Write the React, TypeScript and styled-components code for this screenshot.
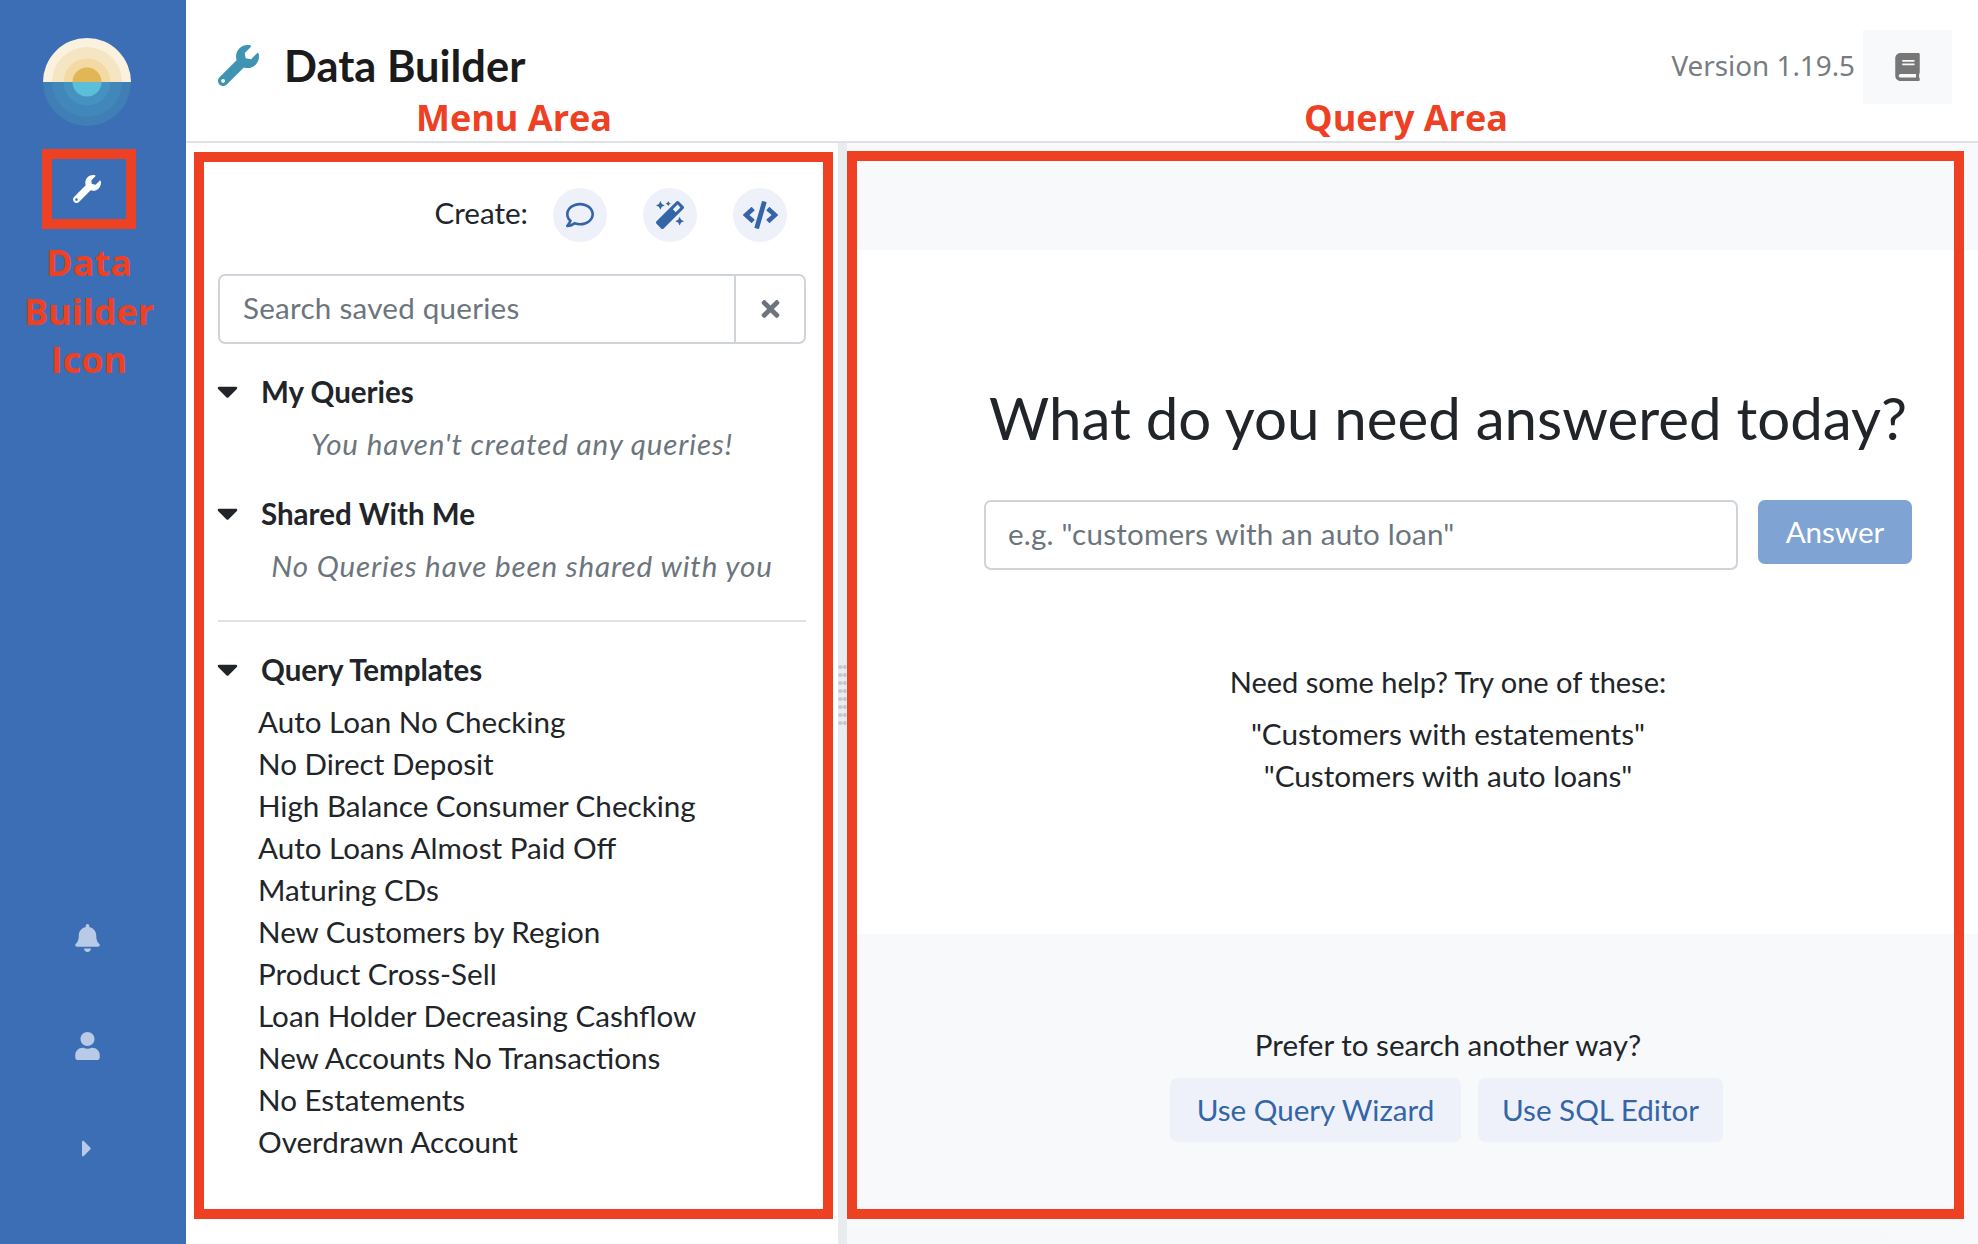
import React from "react";
import styled, { createGlobalStyle } from "styled-components";
import { FaWrench, FaBook, FaBell, FaUser, FaCaretRight, FaCaretDown, FaRegComment, FaMagic, FaCode, FaTimes } from "react-icons/fa";

const Global = createGlobalStyle`
  html, body { margin: 0; padding: 0; background: #fff; }
  * { box-sizing: border-box; }
  body { font-family: "Lato", "Noto Sans", sans-serif; color: #212529; }
`;

const Page = styled.div`
  position: relative;
  display: flex;
  width: 1978px;
  height: 1244px;
  overflow: hidden;
`;

const Sidebar = styled.aside`
  width: 186px;
  flex: none;
  background: #3b6eb4;
  display: flex;
  flex-direction: column;
  align-items: center;
  padding: 38px 12px 0 0;
`;

const Logo = styled.svg`
  width: 88px;
  height: 88px;
  display: block;
`;

const NavItem = styled.div<{ $top: number }>`
  margin-top: ${(p) => p.$top}px;
  height: 28px;
  display: flex;
  align-items: center;
  justify-content: center;
`;

const NavWrench = styled(FaWrench)`
  width: 28px;
  height: 28px;
  color: #fff;
`;

const NavBell = styled(FaBell)`
  width: 25px;
  height: 28px;
  color: #b8cae5;
`;

const NavUser = styled(FaUser)`
  width: 25px;
  height: 28px;
  color: #b8cae5;
`;

const NavCaret = styled(FaCaretRight)`
  width: 10px;
  height: 27px;
  color: #b8cae5;
`;

const Spacer = styled.div`
  flex: 1;
`;

const Main = styled.div`
  flex: 1;
  min-width: 0;
  display: flex;
  flex-direction: column;
`;

const Header = styled.header`
  height: 143px;
  flex: none;
  border-bottom: 2px solid #dee2e6;
  display: flex;
  padding: 30px 26px 0 32px;
  align-items: flex-start;
`;

const HeaderWrench = styled(FaWrench)`
  width: 41px;
  height: 41px;
  color: #3f94b3;
  margin-top: 15px;
  flex: none;
`;

const Title = styled.h1`
  margin: 8px 0 0 25px;
  font-size: 43.4px;
  line-height: 54px;
  font-weight: 700;
  color: #1b1b1b;
`;

const HeaderRight = styled.div`
  margin-left: auto;
  display: flex;
  align-items: center;
  gap: 8px;
`;

const Version = styled.span`
  font-family: "Noto Sans", sans-serif;
  font-size: 27.8px;
  line-height: 70px;
  height: 74px;
  color: #777c81;
`;

const BookButton = styled.div`
  width: 89px;
  height: 74px;
  background: #f8f9fb;
  display: flex;
  align-items: center;
  justify-content: center;
`;

const BookIcon = styled(FaBook)`
  width: 25px;
  height: 28px;
  color: #777;
`;

const Body = styled.div`
  flex: 1;
  display: flex;
  min-height: 0;
`;

const Menu = styled.section`
  width: 652px;
  flex: none;
  padding: 45px 32px 0;
`;

const CreateRow = styled.div`
  display: flex;
  align-items: center;
  justify-content: flex-end;
  padding-right: 19px;
  gap: 36px;
`;

const CreateLabel = styled.span`
  font-size: 29.6px;
  line-height: 42px;
  margin-right: -11px;
  padding-bottom: 5px;
`;

const RoundButton = styled.div<{ $icon?: number }>`
  width: 54px;
  height: 54px;
  border-radius: 50%;
  background: #eef1f9;
  color: #3465a8;
  display: flex;
  align-items: center;
  justify-content: center;
  & svg { width: ${(p) => p.$icon ?? 28}px; height: 28px; }
`;

const SearchBox = styled.div`
  margin-top: 32px;
  height: 70px;
  border: 2.5px solid #ced4da;
  border-radius: 7px;
  display: flex;
`;

const SearchText = styled.div`
  flex: 1;
  padding-left: 23px;
  font-size: 29.6px;
  letter-spacing: 0.25px;
  line-height: 64px;
  color: #6c757d;
  border-right: 2.5px solid #ced4da;
`;

const SearchClear = styled.div`
  width: 68px;
  flex: none;
  display: flex;
  align-items: center;
  justify-content: center;
  color: #6c757d;
  & svg { width: 23px; height: 26px; }
`;

const SectionHead = styled.div<{ $top: number }>`
  margin-top: ${(p) => p.$top}px;
  height: 42px;
  display: flex;
  align-items: center;
  font-size: 29.5px;
  font-weight: 700;
  color: #212529;
`;

const Caret = styled(FaCaretDown)`
  width: 21px;
  height: 34px;
  color: #212529;
  margin: 0 23px 0 -1px;
  flex: none;
`;

const EmptyNote = styled.div`
  margin-top: 11px;
  height: 42px;
  line-height: 42px;
  font-size: 29.6px;
  letter-spacing: 0.85px;
  font-style: italic;
  text-align: center;
  color: #6c757d;
  padding-left: 20px;
  white-space: nowrap;
`;

const Rule = styled.hr`
  margin: 33px 0 0;
  border: none;
  border-top: 2px solid #dee2e6;
`;

const Templates = styled.ul`
  list-style: none;
  margin: 11px 0 0;
  padding: 0 0 0 40px;
`;

const Template = styled.li`
  height: 42px;
  line-height: 42px;
  font-size: 29.6px;
  white-space: nowrap;
`;

const Splitter = styled.div`
  width: 9px;
  flex: none;
  background: #e9ecef;
  display: flex;
  align-items: center;
  justify-content: center;
`;

const Grip = styled.div`
  width: 9px;
  height: 62px;
  background-image: radial-gradient(circle, #c3c5c7 1.6px, transparent 2.2px);
  background-size: 4.5px 8px;
`;

const Query = styled.section`
  flex: 1;
  min-width: 0;
  background: #f8f9fb;
  display: flex;
  flex-direction: column;
`;

const Band = styled.div`
  height: 107px;
  flex: none;
`;

const Ask = styled.div`
  height: 684px;
  flex: none;
  background: #fff;
  padding: 132px 0 0 137px;
`;

const AskInner = styled.div`
  width: 928px;
  text-align: center;
`;

const Heading = styled.h2`
  margin: 0;
  font-size: 58.2px;
  line-height: 72px;
  font-weight: 400;
  white-space: nowrap;
  color: #212529;
`;

const AskRow = styled.div`
  margin-top: 46px;
  display: flex;
  align-items: flex-start;
  gap: 20px;
`;

const AskInput = styled.div`
  width: 754px;
  height: 70px;
  border: 2.5px solid #ced4da;
  border-radius: 7px;
  padding-left: 22px;
  font-size: 29.6px;
  letter-spacing: 0.2px;
  line-height: 64px;
  color: #6c757d;
  text-align: left;
`;

const AnswerButton = styled.div`
  width: 154px;
  height: 64px;
  border-radius: 7px;
  background: #7fa3d2;
  color: #fff;
  font-size: 29.6px;
  line-height: 64px;
  text-align: center;
`;

const Hint = styled.div<{ $top: number; $size: number }>`
  margin-top: ${(p) => p.$top}px;
  height: 42px;
  line-height: 42px;
  font-size: ${(p) => p.$size}px;
  white-space: nowrap;
`;

const Alternatives = styled.div`
  height: 294px;
  flex: none;
  padding: 89.5px 0 0 137px;
`;

const AltText = styled.div`
  width: 928px;
  text-align: center;
  font-size: 29.6px;
  line-height: 42px;
  color: #212529;
`;

const AltButtons = styled.div`
  margin: 12.5px 0 0 186px;
  display: flex;
  gap: 17px;
`;

const AltButton = styled.div<{ $width: number }>`
  width: ${(p) => p.$width}px;
  height: 64px;
  border-radius: 7px;
  background: #eef1f9;
  color: #3465a8;
  font-size: 29.6px;
  line-height: 64px;
  text-align: center;
`;

const NextCard = styled.div`
  flex: 1;
  width: 1042px;
  background: #f7f8fa;
  border-radius: 0 14px 0 0;
`;

const Frame = styled.div<{ $x: number; $y: number; $w: number; $h: number }>`
  position: absolute;
  left: ${(p) => p.$x}px;
  top: ${(p) => p.$y}px;
  width: ${(p) => p.$w}px;
  height: ${(p) => p.$h}px;
  border: 10px solid #ee4023;
  pointer-events: none;
`;

const Note = styled.div<{ $x: number; $y: number }>`
  position: absolute;
  left: ${(p) => p.$x}px;
  top: ${(p) => p.$y}px;
  font-family: "Open Sans", sans-serif;
  font-weight: 700;
  font-size: 36px;
  line-height: 48.5px;
  color: #ee4023;
  text-align: center;
  white-space: nowrap;
  transform: translate(-50%, -50%);
`;

const templates = [
  "Auto Loan No Checking",
  "No Direct Deposit",
  "High Balance Consumer Checking",
  "Auto Loans Almost Paid Off",
  "Maturing CDs",
  "New Customers by Region",
  "Product Cross-Sell",
  "Loan Holder Decreasing Cashflow",
  "New Accounts No Transactions",
  "No Estatements",
  "Overdrawn Account",
];

export default function App() {
  return (
    <Page>
      <Global />
      <Sidebar>
        <Logo viewBox="0 0 88 88">
          <path d="M0 44a44 44 0 0 1 88 0z" fill="#faf1df" />
          <path d="M9 44a35 35 0 0 1 70 0z" fill="#f6e5c3" />
          <path d="M20.500 44a23.500 23.500 0 0 1 47 0z" fill="#f3d9a2" />
          <path d="M29.500 44a14.500 14.500 0 0 1 29 0z" fill="#e2b557" />
          <path d="M0 44a44 44 0 0 0 88 0z" fill="#3f7fb6" />
          <path d="M9 44a35 35 0 0 0 70 0z" fill="#4287ba" />
          <path d="M20.500 44a23.500 23.500 0 0 0 47 0z" fill="#4591bf" />
          <path d="M29.500 44a14.500 14.500 0 0 0 29 0z" fill="#5bbfd9" />
        </Logo>
        <NavItem $top={49}>
          <NavWrench />
        </NavItem>
        <Spacer />
        <NavItem $top={0}>
          <NavBell />
        </NavItem>
        <NavItem $top={80}>
          <NavUser />
        </NavItem>
        <NavItem $top={74}>
          <NavCaret />
        </NavItem>
        <NavItem $top={54} />
      </Sidebar>
      <Main>
        <Header>
          <HeaderWrench />
          <Title>Data Builder</Title>
          <HeaderRight>
            <Version>Version 1.19.5</Version>
            <BookButton>
              <BookIcon />
            </BookButton>
          </HeaderRight>
        </Header>
        <Body>
          <Menu>
            <CreateRow>
              <CreateLabel>Create:</CreateLabel>
              <RoundButton>
                <FaRegComment />
              </RoundButton>
              <RoundButton>
                <FaMagic />
              </RoundButton>
              <RoundButton $icon={35}>
                <FaCode />
              </RoundButton>
            </CreateRow>
            <SearchBox>
              <SearchText>Search saved queries</SearchText>
              <SearchClear>
                <FaTimes />
              </SearchClear>
            </SearchBox>
            <SectionHead $top={26}>
              <Caret />
              My Queries
            </SectionHead>
            <EmptyNote>You haven't created any queries!</EmptyNote>
            <SectionHead $top={27}>
              <Caret />
              Shared With Me
            </SectionHead>
            <EmptyNote>No Queries have been shared with you</EmptyNote>
            <Rule />
            <SectionHead $top={26}>
              <Caret />
              Query Templates
            </SectionHead>
            <Templates>
              {templates.map((t) => (
                <Template key={t}>{t}</Template>
              ))}
            </Templates>
          </Menu>
          <Splitter>
            <Grip />
          </Splitter>
          <Query>
            <Band />
            <Ask>
              <AskInner>
                <Heading>What do you need answered today?</Heading>
                <AskRow>
                  <AskInput>e.g. "customers with an auto loan"</AskInput>
                  <AnswerButton>Answer</AnswerButton>
                </AskRow>
                <Hint $top={91} $size={29}>Need some help? Try one of these:</Hint>
                <Hint $top={10} $size={29.7}>"Customers with estatements"</Hint>
                <Hint $top={0} $size={29.7}>"Customers with auto loans"</Hint>
              </AskInner>
            </Ask>
            <Alternatives>
              <AltText>Prefer to search another way?</AltText>
              <AltButtons>
                <AltButton $width={291}>Use Query Wizard</AltButton>
                <AltButton $width={245}>Use SQL Editor</AltButton>
              </AltButtons>
            </Alternatives>
            <NextCard />
          </Query>
        </Body>
      </Main>
      <Frame $x={42} $y={149} $w={94} $h={80} />
      <Frame $x={194} $y={152} $w={639} $h={1067} />
      <Frame $x={847} $y={151} $w={1117} $h={1068} />
      <Note $x={89} $y={312}>
        Data
        <br />
        Builder
        <br />
        Icon
      </Note>
      <Note $x={514} $y={118}>Menu Area</Note>
      <Note $x={1406} $y={118}>Query Area</Note>
    </Page>
  );
}
